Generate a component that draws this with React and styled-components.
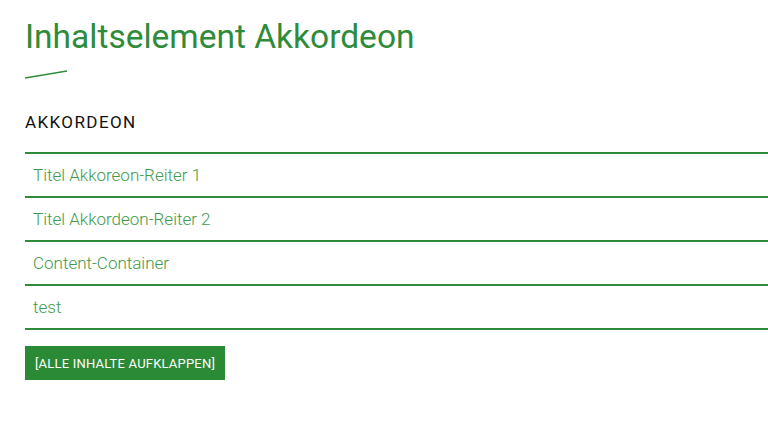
import styled, { createGlobalStyle } from "styled-components";

const GlobalStyle = createGlobalStyle`
  html, body {
    margin: 0;
    padding: 0;
    background: #fff;
  }
  body {
    font-family: Roboto, "Noto Sans", sans-serif;
  }
`;

const Page = styled.main`
  padding: 14px 0 0 25px;
`;

const Title = styled.h1`
  margin: 0;
  font-size: 33.5px;
  font-weight: 400;
  line-height: 46px;
  color: #2e8b3a;
`;

const Dash = styled.svg`
  display: block;
  margin: 10px 0 0;
`;

const SectionTitle = styled.h2`
  margin: 32px 0 19px;
  font-size: 17px;
  font-weight: 400;
  letter-spacing: 1.4px;
  line-height: 22px;
  color: #111;
  text-transform: uppercase;
`;

const List = styled.ul`
  list-style: none;
  margin: 0;
  padding: 0;
  border-top: 2px solid #2e8b3a;
`;

const Item = styled.li`
  height: 42px;
  display: flex;
  align-items: center;
  padding-left: 8px;
  border-bottom: 2px solid #2e8b3a;
  font-size: 17px;
  font-weight: 300;
  color: #3f9a4b;
  cursor: pointer;
`;

const ExpandAll = styled.button`
  margin-top: 16px;
  height: 34px;
  width: 200px;
  padding: 0;
  border: none;
  background: #2a8a35;
  color: #fff;
  font-family: inherit;
  font-size: 13px;
  letter-spacing: 0.2px;
  text-transform: uppercase;
  cursor: pointer;
`;

const tabs = [
  "Titel Akkoreon-Reiter 1",
  "Titel Akkordeon-Reiter 2",
  "Content-Container",
  "test",
];

export default function App() {
  return (
    <>
      <GlobalStyle />
      <Page>
        <Title>Inhaltselement Akkordeon</Title>
        <Dash width="42" height="9" viewBox="0 0 42 9">
          <line x1="0" y1="8" x2="42" y2="1" stroke="#2e8b3a" strokeWidth="1.6" />
        </Dash>
        <SectionTitle>Akkordeon</SectionTitle>
        <List>
          {tabs.map((t) => (
            <Item key={t}>{t}</Item>
          ))}
        </List>
        <ExpandAll>[Alle Inhalte aufklappen]</ExpandAll>
      </Page>
    </>
  );
}
